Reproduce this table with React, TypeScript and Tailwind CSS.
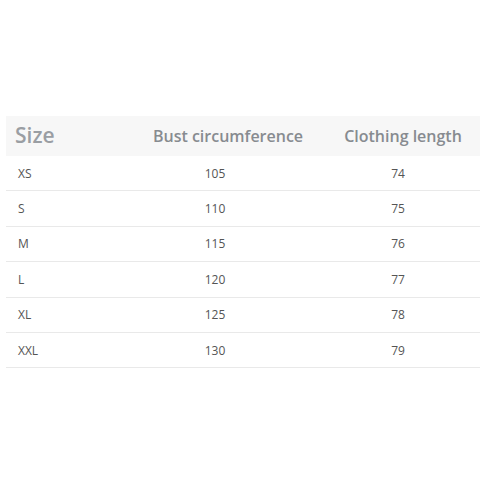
const rows = [
  { size: 'XS', bust: 105, length: 74 },
  { size: 'S', bust: 110, length: 75 },
  { size: 'M', bust: 115, length: 76 },
  { size: 'L', bust: 120, length: 77 },
  { size: 'XL', bust: 125, length: 78 },
  { size: 'XXL', bust: 130, length: 79 },
]

export default function App() {
  return (
    <div className="w-[480px] h-[480px] bg-white pt-[116px] pl-[6px] font-['Open_Sans',sans-serif]">
      {/* Header */}
      <div className="grid grid-cols-[140px_164px_170px] h-[40px] items-center bg-[#f7f7f7] text-[#878b90] font-semibold">
        <div className="pl-[9px] text-[21px] text-[#9a9ea3]">Size</div>
        <div className="text-center text-[16px]">Bust circumference</div>
        <div className="text-center text-[16px] pl-[16px]">Clothing length</div>
      </div>

      {/* Rows */}
      {rows.map((row) => (
        <div
          key={row.size}
          className="grid grid-cols-[140px_164px_170px] h-[35.4px] items-center border-b border-[#e9e9e9] text-[12px] text-[#555] pt-[1px]"
        >
          <div className="pl-[12px]">{row.size}</div>
          <div className="text-center pr-[26px]">{row.bust}</div>
          <div className="text-center pl-[6px]">{row.length}</div>
        </div>
      ))}
    </div>
  )
}
